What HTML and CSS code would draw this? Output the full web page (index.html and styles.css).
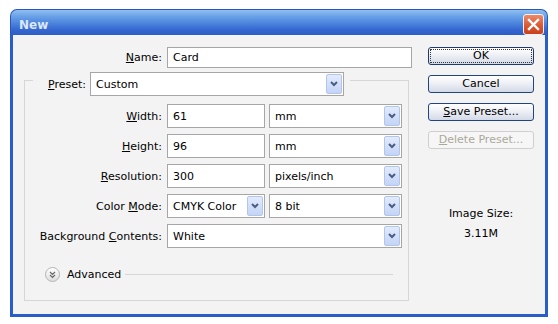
FILE: index.html
```html
<!DOCTYPE html>
<html>
<head>
    <title>New</title>
    <meta charset="utf-8">
    <link rel="stylesheet" href="styles.css">
</head>
<body>
    <div class="window">
        <div class="titlebar">
            <span class="title">New</span>
            <span class="close">
                <svg width="19" height="19" viewBox="0 0 19 19"><path d="M5 5 L14 14 M14 5 L5 14" stroke="#fff" stroke-width="2.4" stroke-linecap="square"/></svg>
            </span>
        </div>
        <div class="client">
            <div class="form">
                <div class="name-row">
                    <label class="name-label"><u>N</u>ame:</label>
                    <div class="field name-field">Card</div>
                </div>

                <div class="group">
                    <div class="group-head">
                        <label class="preset-label"><u>P</u>reset:</label>
                        <div class="select preset">Custom<span class="drop"><svg width="8" height="6" viewBox="0 0 8 6"><path d="M1 1 L4 4 L7 1" fill="none" stroke="#4b5e82" stroke-width="2"/></svg></span></div>
                    </div>

                    <div class="grid">
                        <label class="label"><u>W</u>idth:</label>
                        <div class="field">61</div>
                        <div class="select">mm<span class="drop"><svg width="8" height="6" viewBox="0 0 8 6"><path d="M1 1 L4 4 L7 1" fill="none" stroke="#4b5e82" stroke-width="2"/></svg></span></div>

                        <label class="label"><u>H</u>eight:</label>
                        <div class="field">96</div>
                        <div class="select">mm<span class="drop"><svg width="8" height="6" viewBox="0 0 8 6"><path d="M1 1 L4 4 L7 1" fill="none" stroke="#4b5e82" stroke-width="2"/></svg></span></div>

                        <label class="label"><u>R</u>esolution:</label>
                        <div class="field">300</div>
                        <div class="select">pixels/inch<span class="drop"><svg width="8" height="6" viewBox="0 0 8 6"><path d="M1 1 L4 4 L7 1" fill="none" stroke="#4b5e82" stroke-width="2"/></svg></span></div>

                        <label class="label">Color <u>M</u>ode:</label>
                        <div class="select small">CMYK Color<span class="drop"><svg width="8" height="6" viewBox="0 0 8 6"><path d="M1 1 L4 4 L7 1" fill="none" stroke="#4b5e82" stroke-width="2"/></svg></span></div>
                        <div class="select">8 bit<span class="drop"><svg width="8" height="6" viewBox="0 0 8 6"><path d="M1 1 L4 4 L7 1" fill="none" stroke="#4b5e82" stroke-width="2"/></svg></span></div>

                        <label class="label">Background <u>C</u>ontents:</label>
                        <div class="select wide">White<span class="drop"><svg width="8" height="6" viewBox="0 0 8 6"><path d="M1 1 L4 4 L7 1" fill="none" stroke="#4b5e82" stroke-width="2"/></svg></span></div>
                    </div>

                    <div class="advanced">
                        <span class="adv-icon">
                            <svg width="15" height="15" viewBox="0 0 15 15"><path d="M5 5 L7.5 7.5 L10 5 M5 8 L7.5 10.5 L10 8" fill="none" stroke="#6a6a6a" stroke-width="1.2"/></svg>
                        </span>
                        <span class="adv-text">Advanced</span>
                        <span class="adv-line"></span>
                    </div>
                </div>
            </div>

            <div class="side">
                <div class="button default">OK</div>
                <div class="button">Cancel</div>
                <div class="button"><u>S</u>ave Preset...</div>
                <div class="button disabled"><u>D</u>elete Preset...</div>
                <div class="size-label">Image Size:</div>
                <div class="size-value">3.11M</div>
            </div>
        </div>
    </div>
</body>
</html>
```

FILE: styles.css
```css
body {
    margin: 0;
    background-color: #fff;
    font-family: "DejaVu Sans", sans-serif;
    font-size: 11px;
    color: #000;
}

.window {
    width: 538px;
    margin: 9px 0 0 10px;
}

.titlebar {
    height: 26px;
    box-sizing: border-box;
    padding: 0 3px 0 8px;
    display: flex;
    justify-content: space-between;
    align-items: flex-start;
    border-radius: 7px 7px 0 0;
    background: linear-gradient(#8fc0f1 0%, #6aa2e8 25%, #4a82dc 55%, #3566cf 80%, #2c5cc6 100%);
    border: 1px solid #2a56b8;
    border-bottom: 0;
}

.title {
    margin-top: 8px;
    font-size: 12px;
    font-weight: bold;
    line-height: 14px;
    color: #dce7f8;
}

.close {
    width: 19px;
    height: 19px;
    margin-top: 4px;
    border: 1px solid #f2f2f2;
    border-radius: 3px;
    background: linear-gradient(#ec8a6a, #d9562f 60%, #c9401c);
    display: flex;
}

.client {
    height: 282px;
    box-sizing: border-box;
    display: flex;
    padding-top: 12px;
    background-color: #f3f3f3;
    border: 3px solid #2b5dc9;
    border-top: 0;
}

.form {
    width: 399px;
}

.name-row {
    display: flex;
    align-items: center;
    height: 21px;
}

.name-label {
    width: 149px;
    margin-right: 5px;
    text-align: right;
}

.field {
    height: 100%;
    box-sizing: border-box;
    border: 1px solid #a6a6a6;
    background-color: #fff;
    padding-left: 5px;
    display: flex;
    align-items: center;
}

.name-field {
    width: 245px;
}

.group {
    width: 385px;
    box-sizing: border-box;
    margin: 12px 0 0 11px;
    padding-bottom: 17px;
    border: 1px solid #d6d6d6;
}

.group-head {
    width: fit-content;
    height: 24px;
    display: flex;
    align-items: center;
    margin: -9px 0 0 8px;
    padding: 0 6px 0 15px;
    background-color: #f3f3f3;
}

.preset-label {
    margin-right: 4px;
}

.select {
    height: 100%;
    box-sizing: border-box;
    border: 1px solid #a6a6a6;
    background-color: #fff;
    padding-left: 5px;
    display: flex;
    align-items: center;
}

.select.preset {
    width: 254px;
}

.drop {
    margin-left: auto;
    width: 16px;
    height: calc(100% - 2px);
    margin-right: 1px;
    box-sizing: border-box;
    border: 1px solid #b3c5ea;
    border-radius: 2px;
    background: linear-gradient(#e3ebfc, #c3d4f7);
    display: flex;
    align-items: center;
    justify-content: center;
}

.grid {
    display: grid;
    grid-template-columns: 142px 102px 133px;
    grid-auto-rows: 24px;
    row-gap: 6px;
    margin-top: 8px;
}

.label {
    padding-right: 5px;
    text-align: right;
    align-self: center;
}

.grid .field,
.grid .select.small {
    width: 98px;
}

.select.wide {
    grid-column: 2 / 4;
}

.advanced {
    display: flex;
    align-items: center;
    height: 18px;
    margin-top: 17px;
}

.adv-icon {
    width: 15px;
    height: 15px;
    box-sizing: border-box;
    margin: 0 7px 0 20px;
    border: 1px solid #b4b4b4;
    border-radius: 50%;
    background: linear-gradient(#ffffff, #dedede);
    display: flex;
    align-items: center;
    justify-content: center;
}

.adv-icon svg {
    margin: -1px;
}

.adv-line {
    flex: 1;
    height: 1px;
    margin: 0 15px 0 4px;
    background-color: #d6d6d6;
}

.side {
    width: 106px;
    margin-left: 16px;
    text-align: center;
}

.button {
    height: 18px;
    box-sizing: border-box;
    margin-bottom: 10px;
    border: 1px solid #23457f;
    border-radius: 3px;
    background: linear-gradient(#ffffff 0%, #eef0f5 45%, #d3d9e7 100%);
    line-height: 16px;
}

.button.default {
    outline: 1px dotted #333;
    outline-offset: -3px;
    border-color: #1c3a70;
}

.button.disabled {
    border-color: #cfcfcf;
    background: #f6f6f6;
    color: #aca899;
}

.size-label {
    margin-top: 55px;
    line-height: 20px;
}

.size-value {
    line-height: 20px;
}
```
